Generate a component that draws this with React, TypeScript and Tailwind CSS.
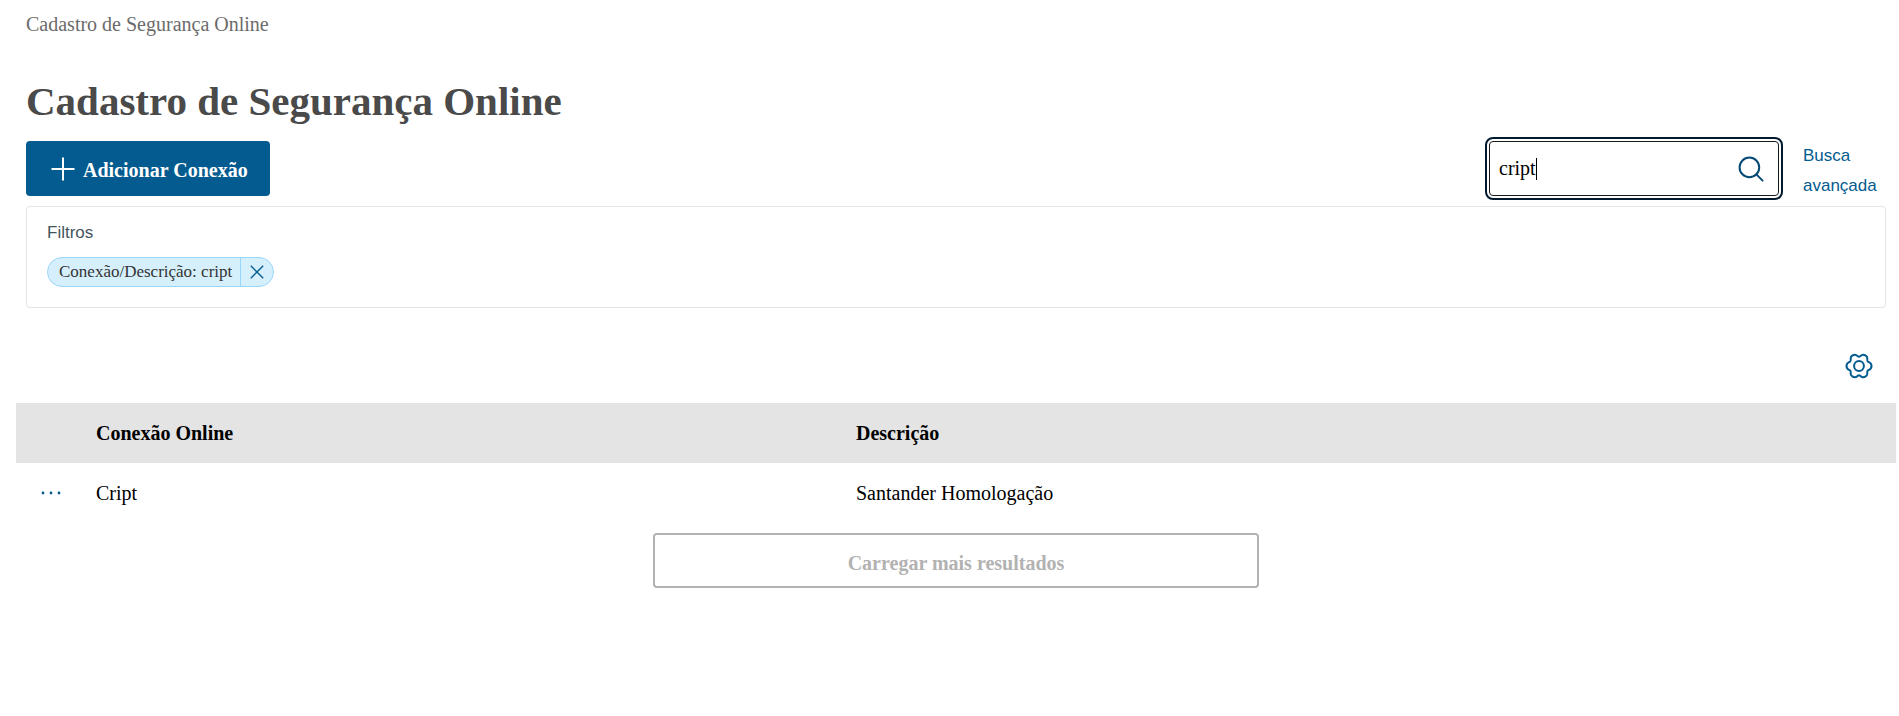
import { useState } from 'react';

const rows = [{ connection: 'Cript', description: 'Santander Homologação' }];

function PlusIcon() {
  return (
    <svg className="w-6 h-6" viewBox="0 0 24 24" fill="none" stroke="currentColor" strokeWidth="2" aria-hidden="true">
      <path d="M12 0.5v23M0.5 12h23" />
    </svg>
  );
}

function SearchIcon() {
  return (
    <svg className="w-7 h-7" viewBox="0 0 28 28" fill="none" stroke="currentColor" strokeWidth="2" strokeLinecap="round" aria-hidden="true">
      <circle cx="12.4" cy="12.4" r="9.8" />
      <path d="M19.4 19.4l6.2 6.2" />
    </svg>
  );
}

function CloseIcon() {
  return (
    <svg className="w-4 h-4" viewBox="0 0 16 16" fill="none" stroke="currentColor" strokeWidth="1.3" aria-hidden="true">
      <path d="M1.8 1.8l12.4 12.4M14.2 1.8L1.8 14.2" />
    </svg>
  );
}

function GearIcon() {
  return (
    <svg className="w-7 h-7" viewBox="0 0 28 28" fill="none" stroke="currentColor" strokeWidth="2" strokeLinejoin="round" aria-hidden="true">
      <path d="M14 4.8C15.2 4.8 16 2.7 18 2.7C19.6 2.7 22.3 4 22.3 6.2C22.3 7.8 21.9 9 22.9 9.6C24 10.2 26.5 10.6 26.5 14C26.5 17.4 24 17.8 22.9 18.4C21.9 19 22.3 20.2 22.3 21.8C22.3 24 19.6 25.3 18 25.3C16 25.3 15.2 23.2 14 23.2C12.8 23.2 12 25.3 10 25.3C8.4 25.3 5.7 24 5.7 21.8C5.7 20.2 6.1 19 5.1 18.4C4 17.8 1.5 17.4 1.5 14C1.5 10.6 4 10.2 5.1 9.6C6.1 9 5.7 7.8 5.7 6.2C5.7 4 8.4 2.7 10 2.7C12 2.7 12.8 4.8 14 4.8Z" />
      <circle cx="14" cy="14" r="4.9" />
    </svg>
  );
}

function MoreIcon() {
  return (
    <svg className="w-6 h-6" viewBox="0 0 24 24" fill="currentColor" aria-hidden="true">
      <circle cx="4" cy="12" r="1.4" />
      <circle cx="12" cy="12" r="1.4" />
      <circle cx="20" cy="12" r="1.4" />
    </svg>
  );
}

function Toolbar() {
  const [search, setSearch] = useState('cript');

  return (
    <div className="flex items-start justify-between">
      <button className="flex items-center gap-2 h-[55px] pl-[25px] pr-[22px] rounded bg-[#045b8f] text-white text-[20px] font-bold">
        <PlusIcon />
        <span className="pt-0.5">Adicionar Conexão</span>
      </button>

      <div className="flex items-start gap-6">
        <div className="relative flex items-center w-[290px] h-[55px] pr-[13px] border border-[#1a1a1a] rounded outline-2 outline-offset-2 outline-[#001a30]">
          <input
            type="text"
            aria-label="Pesquisar"
            value={search}
            onChange={(e) => setSearch(e.target.value)}
            className="flex-1 min-w-0 h-full pl-[9px] text-[20px] text-black outline-none caret-transparent"
          />
          <span className="absolute left-[46px] top-4 w-px h-[22px] bg-black" />
          <button aria-label="Buscar" className="text-[#044a75]">
            <SearchIcon />
          </button>
        </div>
        <a href="#" className="w-[83px] font-['Liberation_Sans',sans-serif] text-[17px] leading-[30px] text-[#045b8f]">
          Busca avançada
        </a>
      </div>
    </div>
  );
}

function Filters() {
  return (
    <section className="mt-[5px] px-5 pt-[14px] pb-5 border border-[#e4e4e4] rounded">
      <h2 className="font-['Liberation_Sans',sans-serif] text-[17px] leading-6 text-[#44555c]">Filtros</h2>
      <div className="flex mt-3">
        <div className="flex h-[30px] border border-[#99d6fa] rounded-full bg-[#d6effc] text-[17px] leading-7 text-[#333333]">
          <span className="pl-[11px] pr-2">Conexão/Descrição: cript</span>
          <button aria-label="Remover filtro" className="flex items-center px-2 border-l border-[#99d6fa] text-[#045b8f]">
            <CloseIcon />
          </button>
        </div>
      </div>
    </section>
  );
}

export default function App() {
  return (
    <main className="pl-[26px] pr-[13px] font-['Liberation_Serif',serif] bg-white">
      <nav className="pt-[9px] text-[20px] leading-[30px] text-[#6b6b6b]">Cadastro de Segurança Online</nav>
      <h1 className="mt-8 mb-[10px] text-[41px] leading-[60px] font-bold text-[#4a4a4a]">Cadastro de Segurança Online</h1>
      <Toolbar />
      <Filters />

      <div className="flex justify-end mt-11 mb-[23px] pr-[13px]">
        <button aria-label="Configurações" className="text-[#045b8f]">
          <GearIcon />
        </button>
      </div>

      <div className="-mx-[10px]">
        <table className="w-full table-fixed text-left text-[20px] text-black">
          <thead>
            <tr className="h-[60px] bg-[#e4e4e4]">
              <th className="w-20" />
              <th className="w-[760px]">Conexão Online</th>
              <th>Descrição</th>
            </tr>
          </thead>
          <tbody>
            {rows.map((row) => (
              <tr key={row.connection} className="h-[60px]">
                <td>
                  <button aria-label="Mais ações" className="block ml-[23px] text-[#045b8f]">
                    <MoreIcon />
                  </button>
                </td>
                <td>{row.connection}</td>
                <td>{row.description}</td>
              </tr>
            ))}
          </tbody>
        </table>
      </div>

      <div className="flex justify-center mt-[10px]">
        <button disabled className="w-[606px] h-[55px] pt-1 border-2 border-[#b2b2b2] rounded text-[20px] font-bold text-[#b2b2b2]">
          Carregar mais resultados
        </button>
      </div>
    </main>
  );
}
